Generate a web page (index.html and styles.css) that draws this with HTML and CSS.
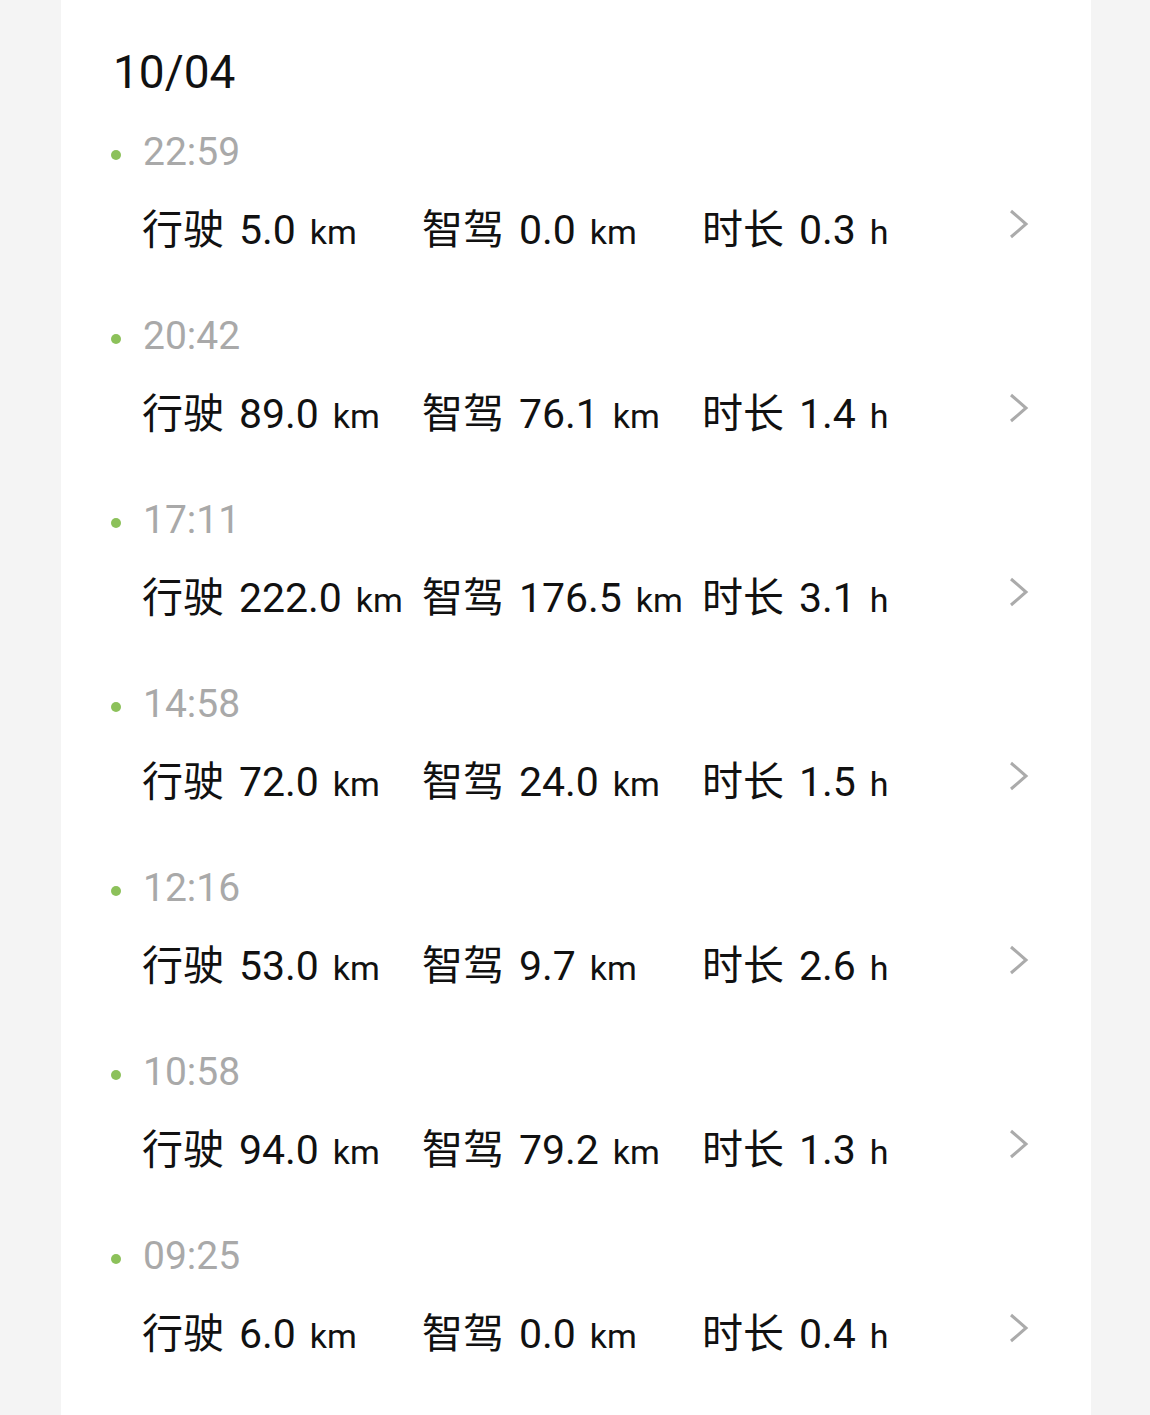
FILE: index.html
```html
<!DOCTYPE html>
<html lang="zh-CN">
<head>
  <meta charset="UTF-8">
  <meta name="viewport" content="width=device-width, initial-scale=1.0">
  <title>行程记录</title>
  <link rel="stylesheet" href="styles.css">
</head>
<body>

<div class="card">
  <h2 class="date">10/04</h2>

  <ul class="trips">
    <li class="trip">
      <div class="time"><span class="dot"></span>22:59</div>
      <div class="stats">
        <span class="stat"><span class="label">行驶</span> <span class="num">5.0</span> <span class="unit">km</span></span>
        <span class="stat"><span class="label">智驾</span> <span class="num">0.0</span> <span class="unit">km</span></span>
        <span class="stat"><span class="label">时长</span> <span class="num">0.3</span> <span class="unit">h</span></span>
        <svg class="arrow" viewBox="0 0 24 34"><polyline points="5,4 20,17 5,30" /></svg>
      </div>
    </li>
    <li class="trip">
      <div class="time"><span class="dot"></span>20:42</div>
      <div class="stats">
        <span class="stat"><span class="label">行驶</span> <span class="num">89.0</span> <span class="unit">km</span></span>
        <span class="stat"><span class="label">智驾</span> <span class="num">76.1</span> <span class="unit">km</span></span>
        <span class="stat"><span class="label">时长</span> <span class="num">1.4</span> <span class="unit">h</span></span>
        <svg class="arrow" viewBox="0 0 24 34"><polyline points="5,4 20,17 5,30" /></svg>
      </div>
    </li>
    <li class="trip">
      <div class="time"><span class="dot"></span>17:11</div>
      <div class="stats">
        <span class="stat"><span class="label">行驶</span> <span class="num">222.0</span> <span class="unit">km</span></span>
        <span class="stat"><span class="label">智驾</span> <span class="num">176.5</span> <span class="unit">km</span></span>
        <span class="stat"><span class="label">时长</span> <span class="num">3.1</span> <span class="unit">h</span></span>
        <svg class="arrow" viewBox="0 0 24 34"><polyline points="5,4 20,17 5,30" /></svg>
      </div>
    </li>
    <li class="trip">
      <div class="time"><span class="dot"></span>14:58</div>
      <div class="stats">
        <span class="stat"><span class="label">行驶</span> <span class="num">72.0</span> <span class="unit">km</span></span>
        <span class="stat"><span class="label">智驾</span> <span class="num">24.0</span> <span class="unit">km</span></span>
        <span class="stat"><span class="label">时长</span> <span class="num">1.5</span> <span class="unit">h</span></span>
        <svg class="arrow" viewBox="0 0 24 34"><polyline points="5,4 20,17 5,30" /></svg>
      </div>
    </li>
    <li class="trip">
      <div class="time"><span class="dot"></span>12:16</div>
      <div class="stats">
        <span class="stat"><span class="label">行驶</span> <span class="num">53.0</span> <span class="unit">km</span></span>
        <span class="stat"><span class="label">智驾</span> <span class="num">9.7</span> <span class="unit">km</span></span>
        <span class="stat"><span class="label">时长</span> <span class="num">2.6</span> <span class="unit">h</span></span>
        <svg class="arrow" viewBox="0 0 24 34"><polyline points="5,4 20,17 5,30" /></svg>
      </div>
    </li>
    <li class="trip">
      <div class="time"><span class="dot"></span>10:58</div>
      <div class="stats">
        <span class="stat"><span class="label">行驶</span> <span class="num">94.0</span> <span class="unit">km</span></span>
        <span class="stat"><span class="label">智驾</span> <span class="num">79.2</span> <span class="unit">km</span></span>
        <span class="stat"><span class="label">时长</span> <span class="num">1.3</span> <span class="unit">h</span></span>
        <svg class="arrow" viewBox="0 0 24 34"><polyline points="5,4 20,17 5,30" /></svg>
      </div>
    </li>
    <li class="trip">
      <div class="time"><span class="dot"></span>09:25</div>
      <div class="stats">
        <span class="stat"><span class="label">行驶</span> <span class="num">6.0</span> <span class="unit">km</span></span>
        <span class="stat"><span class="label">智驾</span> <span class="num">0.0</span> <span class="unit">km</span></span>
        <span class="stat"><span class="label">时长</span> <span class="num">0.4</span> <span class="unit">h</span></span>
        <svg class="arrow" viewBox="0 0 24 34"><polyline points="5,4 20,17 5,30" /></svg>
      </div>
    </li>
  </ul>
</div>

</body>
</html>
```

FILE: styles.css
```css
body{
	margin: 0;
	background: #f4f4f4;
	font-family: Roboto, "Noto Sans CJK SC", sans-serif;
	color: #111;
}

.card{
	width: 1030px;
	min-height: 1415px;
	margin-left: 61px;
	background: #fff;
	padding: 42px 0 0 50px;
	box-sizing: border-box;
}

.date{
	margin: 0;
	padding-left: 2px;
	font-size: 46px;
	font-weight: 400;
	line-height: 60px;
}

.trips{
	list-style: none;
	margin: 22px 0 0;
	padding: 0;
}

.trip{
	padding-bottom: 54px;
}

.time{
	display: flex;
	align-items: center;
	height: 56px;
	font-size: 39px;
	color: #a9a9a9;
}

.dot{
	width: 10px;
	height: 10px;
	border-radius: 50%;
	background: #8cc15a;
	margin: 6px 22px 0 0;
}

.stats{
	display: flex;
	align-items: center;
	height: 56px;
	margin-top: 18px;
	padding-left: 31px;
	white-space: nowrap;
}

.stat{
	width: 280px;
	flex: none;
	font-size: 40px;
}

.label{
	font-size: 41px;
	font-family: "Noto Sans CJK SC", sans-serif;
	margin-right: 5px;
}

.num{
	font-size: 41px;
}

.unit{
	font-size: 34px;
	margin-left: 4px;
}

.arrow{
	width: 24px;
	height: 34px;
	margin: 0 0 4px 24px;
	fill: none;
	stroke: #ababab;
	stroke-width: 3;
}
```
